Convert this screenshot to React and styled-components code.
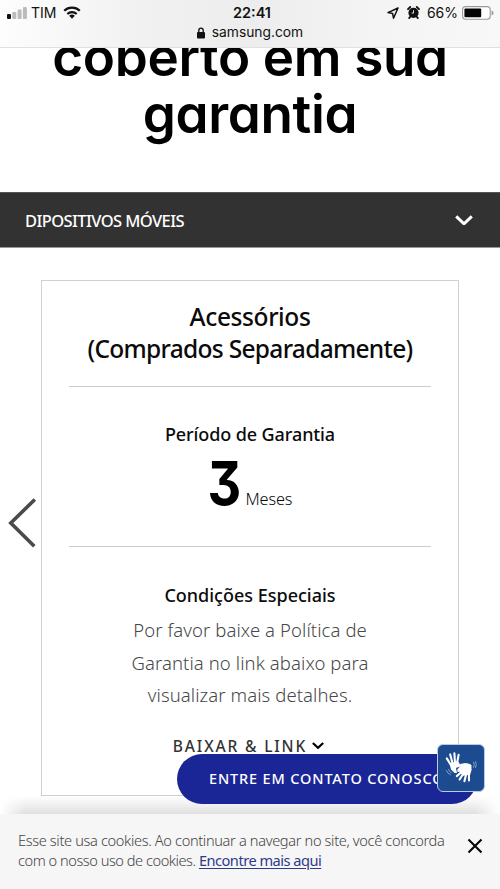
import React from "react";
import styled, { createGlobalStyle } from "styled-components";

const GlobalStyle = createGlobalStyle`
  *, *::before, *::after { box-sizing: border-box; }
  body { margin: 0; background: #fff; }
  h1, h2, h3, p { margin: 0; }
  button { font: inherit; border: 0; padding: 0; background: none; }
`;

const Screen = styled.div`
  position: relative;
  display: flex;
  flex-direction: column;
  width: 500px;
  height: 889px;
  overflow: hidden;
  background: #fff;
  color: #0b0b0b;
  font-family: "Noto Sans", sans-serif;
`;

/* Browser chrome */
const StatusBar = styled.header`
  flex: none;
  height: 48px;
  border-bottom: 1px solid #e0e0e0;
  background: linear-gradient(90deg, #fdfdfd 0%, #f1f1f1 28%, #ededed 50%, #f4f4f4 75%, #f8f8f8 100%);
  font-family: Inter, sans-serif;
  color: #111;
`;
const StatusRow = styled.div`
  display: grid;
  grid-template-columns: 1fr auto 1fr;
  align-items: center;
  height: 25px;
  padding: 0 6px 0 7px;
  line-height: 25px;
`;
const StatusGroup = styled.div`
  display: flex;
  align-items: center;
  justify-content: ${(p) => (p.$end ? "flex-end" : "flex-start")};
  font-size: 14px;
  svg { display: block; flex: none; }
`;
const Carrier = styled.span`margin: 0 7px 0 3px;`;
const Clock = styled.span`
  margin-left: 3px;
  font-size: 14.5px;
  font-weight: 600;
`;
const AlarmSlot = styled.span`margin-left: 8px;`;
const BatteryLevel = styled.span`margin: 0 4px 0 7px;`;
const AddressRow = styled.div`
  display: flex;
  align-items: center;
  justify-content: center;
  gap: 7px;
  height: 15px;
  font-size: 13.8px;
  line-height: 15px;
`;

/* Page */
const Page = styled.main`
  flex: 1;
  min-height: 0;
  overflow: hidden;
`;
const Hero = styled.h1`
  display: flex;
  flex-direction: column;
  justify-content: flex-end;
  height: 144px;
  padding-bottom: 50px;
  overflow: hidden;
  text-align: center;
  font: 600 53px/56.5px Inter, sans-serif;
  font-feature-settings: "cv11";
  letter-spacing: -0.35px;
  color: #000;
`;
const HeroLine = styled.span`
  flex: none;
  display: block;
`;
const CategoryBar = styled.div`
  display: flex;
  align-items: center;
  justify-content: space-between;
  height: 56px;
  padding: 0 27px 0 25px;
  border-top: 1px solid #555;
  border-bottom: 1px solid #999;
  background: #323232;
  color: #fff;
  font-size: 16.5px;
  font-weight: 500;
  letter-spacing: -0.58px;
`;
const Carousel = styled.section`
  display: flex;
  align-items: flex-start;
  padding-top: 32px;
`;
const PreviousButton = styled.button`
  flex: none;
  width: 41px;
  height: 50px;
  margin-top: 218px;
  padding-left: 8px;
  svg { display: block; }
`;
const Card = styled.article`
  width: 418px;
  height: 516px;
  padding: 20px 27px 0;
  border: 1px solid #d0d0d0;
  text-align: center;
`;
const CardTitle = styled.h2`
  padding-bottom: 22px;
  border-bottom: 1px solid #cdcdcd;
  font-size: 24.5px;
  font-weight: 500;
  line-height: 31.5px;
  letter-spacing: ${(p) => p.$spacing || -0.7}px;
  white-space: nowrap;
`;
const CardTitleLead = styled.span`letter-spacing: -0.4px;`;
const Period = styled.section`
  height: 160px;
  padding-top: 34px;
  border-bottom: 1px solid #cdcdcd;
`;
const Subtitle = styled.h3`
  font-size: 18px;
  font-weight: 500;
  line-height: 26px;
  letter-spacing: ${(p) => p.$spacing || 0}px;
`;
const Duration = styled.div`
  display: flex;
  align-items: baseline;
  justify-content: center;
  padding: 5px 3px 0 0;
  line-height: 62px;
`;
const DurationValue = styled.span`
  display: inline-block;
  font-family: Inter, sans-serif;
  font-size: 60px;
  font-weight: 700;
  font-feature-settings: "cv09";
  transform: scaleX(0.87);
  color: #000;
`;
const DurationUnit = styled.span`
  margin-left: 2px;
  font-size: 16.3px;
  font-weight: 300;
  letter-spacing: -0.1px;
`;
const Conditions = styled.section`padding-top: 35px;`;
const Description = styled.p`
  margin-top: 6px;
  color: #484848;
  font-size: 18.5px;
  font-weight: 300;
  line-height: 32.5px;
  letter-spacing: 0.09px;
`;
const DownloadButton = styled.button`
  display: inline-flex;
  align-items: center;
  gap: 5px;
  height: 24px;
  margin: 22px 3px 0 0;
  color: #333;
  font-size: 15.5px;
  font-weight: 500;
  letter-spacing: 1.85px;
  svg { color: #000; }
`;

/* Floating controls */
const ContactButton = styled.button`
  position: absolute;
  left: 177px;
  top: 754px;
  width: 300px;
  height: 50px;
  padding: 0 0 2px 32px;
  border-radius: 25px;
  background: #1a2596;
  color: #fff;
  font-size: 14.5px;
  font-weight: 500;
  letter-spacing: 0.85px;
  text-align: left;
  white-space: nowrap;
`;
const SignLanguageButton = styled.button`
  position: absolute;
  left: 437px;
  top: 744px;
  display: grid;
  place-items: center;
  width: 48px;
  height: 48px;
  border: 1px solid #b9cbe6;
  border-radius: 6px;
  background: #1c4c8f;
`;

/* Cookie notice */
const CookieBar = styled.footer`
  position: relative;
  flex: none;
  display: flex;
  justify-content: space-between;
  height: 75px;
  padding: 16px 17px 0 18px;
  background: #f6f6f6;
  &::before {
    content: "";
    position: absolute;
    left: 0;
    right: 0;
    top: -18px;
    height: 18px;
    background: linear-gradient(to bottom, rgba(0,0,0,0), rgba(0,0,0,.12));
    mask-image: linear-gradient(90deg, transparent, #000 5%, #000 95%, transparent);
  }
`;
const CookieText = styled.p`
  color: #444;
  font-size: 14.6px;
  font-weight: 300;
  line-height: 20px;
  white-space: nowrap;
`;
const CookieLine = styled.span`
  display: block;
  letter-spacing: ${(p) => p.$spacing}px;
`;
const CookieLink = styled.a`
  color: #2e3b86;
  font-weight: 400;
  letter-spacing: -0.5px;
  text-decoration: underline;
  text-underline-offset: 2px;
`;
const CloseButton = styled.button`
  width: 16px;
  height: 16px;
  margin-top: 8px;
  svg { display: block; }
`;

const Signal = () => (
  <svg width="21" height="14" viewBox="0 0 21 14">
    <rect x="0" y="8" width="4" height="5" rx="1" fill="#111" />
    <rect x="5.3" y="6" width="4" height="7" rx="1" fill="#bbb" />
    <rect x="10.6" y="3.5" width="4" height="9.5" rx="1" fill="#bbb" />
    <rect x="15.9" y="1" width="4" height="12" rx="1" fill="#bbb" />
  </svg>
);
const Wifi = () => (
  <svg width="18" height="13" viewBox="0 0 18 13" fill="none" stroke="#111" strokeWidth="2.2">
    <path d="M1.2 4.8a11.2 11.2 0 0 1 15.6 0M4.3 8a6.8 6.8 0 0 1 9.4 0" />
    <path d="M6.2 9.8a4 4 0 0 1 5.6 0L9 12.7z" fill="#111" stroke="none" />
  </svg>
);
const LocationArrow = () => (
  <svg width="12" height="12" viewBox="0 0 12 12" fill="none" stroke="#111" strokeWidth="1.5" strokeLinejoin="round">
    <path d="M11 1 1 5.6l4.6.9.9 4.7z" />
  </svg>
);
const Alarm = () => (
  <svg width="13" height="13" viewBox="0 0 13 13" fill="none">
    <circle cx="6.5" cy="6.8" r="5.1" fill="#111" />
    <path d="M1 3.2 3.2 1M12 3.2 9.8 1M3.2 10.8l-1 1.3M9.8 10.8l1 1.3" stroke="#111" strokeWidth="1.8" strokeLinecap="round" />
    <path d="M6.5 4.2v2.9H4.6" stroke="#f4f4f4" strokeWidth="0.9" />
  </svg>
);
const Battery = () => (
  <svg width="32" height="14" viewBox="0 0 32 14">
    <rect x=".6" y=".6" width="27.6" height="12.6" rx="3" fill="#fff" stroke="#999" strokeWidth="1.1" />
    <rect x="2.4" y="2.5" width="16.8" height="8.8" rx="1" fill="#050505" />
    <path d="M29.6 4.6q2 .6 2 2.4t-2 2.4z" fill="#999" />
  </svg>
);
const Lock = () => (
  <svg width="8" height="12" viewBox="0 0 8 12">
    <rect y="5" width="8" height="6.4" rx="1" fill="#111" />
    <path d="M1.8 5.5V3.4a2.2 2.2 0 0 1 4.4 0v2.1" fill="none" stroke="#111" strokeWidth="1.3" />
  </svg>
);
const ChevronDown = ({ width, stroke }) => (
  <svg width={width} height={width * 0.6} viewBox="0 0 18 10.8" fill="none" stroke="currentColor" strokeWidth={stroke}>
    <path d="m1.2 1.4 7.8 7.4 7.8-7.4" />
  </svg>
);
const Hands = () => (
  <svg width="32" height="34" viewBox="0 0 32 34" fill="none" stroke="#fff" strokeLinecap="round" strokeLinejoin="round">
    <path fill="#fff" stroke="none" d="M4.6 12.5 12.8 10l2.2 3.2-4 4.1 1 4.6-2.4.1-3.6-3.4z" />
    <path strokeWidth="2.1" d="M6.2 14.5 1.8 7.4M7.6 12.5 5.2 3.4M10 12 9.4 2.4M12 12.5l1.6-8.6" />
    <path fill="#fff" stroke="none" d="M12.2 18.6 17 13.4q5.5-2.4 9.4.6.9 4.6-1.2 9.4l-7 1.4z" />
    <path strokeWidth="2.1" d="M21 13.6q-3-.8-8.2 1.8M17.5 18.2l-4.2 1.6M17 20.5l-5.2 4.6M19 21.5l-4.4 7M21.4 22l-2 8.2M23.9 21l.1 8.4" />
    <path stroke="#8aaad3" strokeWidth=".9" d="M1.4 19.6q1 3 4 4.2M3.4 18.4q.8 2.2 3 3.4M28.6 11.3q1.5 2.4 0 5M30.6 10.6q1.6 3 0 6" />
  </svg>
);

export default function App() {
  return (
    <>
      <GlobalStyle />
      <Screen>
        <StatusBar>
          <StatusRow>
            <StatusGroup>
              <Signal />
              <Carrier>TIM</Carrier>
              <Wifi />
            </StatusGroup>
            <Clock>22:41</Clock>
            <StatusGroup $end>
              <LocationArrow />
              <AlarmSlot><Alarm /></AlarmSlot>
              <BatteryLevel>66%</BatteryLevel>
              <Battery />
            </StatusGroup>
          </StatusRow>
          <AddressRow>
            <Lock />
            samsung.com
          </AddressRow>
        </StatusBar>

        <Page>
          <Hero>
            <HeroLine>coberto em sua</HeroLine>
            <HeroLine>garantia</HeroLine>
          </Hero>
          <CategoryBar>
            DIPOSITIVOS MÓVEIS
            <ChevronDown width={18} stroke={3} />
          </CategoryBar>
          <Carousel>
            <PreviousButton aria-label="Anterior">
              <svg width="29" height="50" viewBox="0 0 29 50" fill="none" stroke="#4a4a4a" strokeWidth="3.6">
                <path d="M26.8 1.5 2.8 25l23.5 23.3" />
              </svg>
            </PreviousButton>
            <Card>
              <CardTitle>
                <CardTitleLead>Acessórios</CardTitleLead>
                <br />
                (Comprados Separadamente)
              </CardTitle>
              <Period>
                <Subtitle $spacing={-0.1}>Período de Garantia</Subtitle>
                <Duration>
                  <DurationValue>3</DurationValue>
                  <DurationUnit>Meses</DurationUnit>
                </Duration>
              </Period>
              <Conditions>
                <Subtitle>Condições Especiais</Subtitle>
                <Description>
                  Por favor baixe a Política de
                  <br />
                  Garantia no link abaixo para
                  <br />
                  visualizar mais detalhes.
                </Description>
                <DownloadButton>
                  BAIXAR &amp; LINK
                  <ChevronDown width={12} stroke={3.2} />
                </DownloadButton>
              </Conditions>
            </Card>
          </Carousel>
        </Page>

        <CookieBar>
          <CookieText>
            <CookieLine $spacing={-0.35}>
              Esse site usa cookies. Ao continuar a navegar no site, você concorda
            </CookieLine>
            <CookieLine $spacing={-0.46}>
              com o nosso uso de cookies. <CookieLink>Encontre mais aqui</CookieLink>
            </CookieLine>
          </CookieText>
          <CloseButton aria-label="Fechar">
            <svg width="16" height="16" viewBox="0 0 16 16" stroke="#050505" strokeWidth="2.1">
              <path d="m1.5 1.5 13 13M14.5 1.5l-13 13" />
            </svg>
          </CloseButton>
        </CookieBar>

        <ContactButton>ENTRE EM CONTATO CONOSCO</ContactButton>
        <SignLanguageButton aria-label="Libras">
          <Hands />
        </SignLanguageButton>
      </Screen>
    </>
  );
}
